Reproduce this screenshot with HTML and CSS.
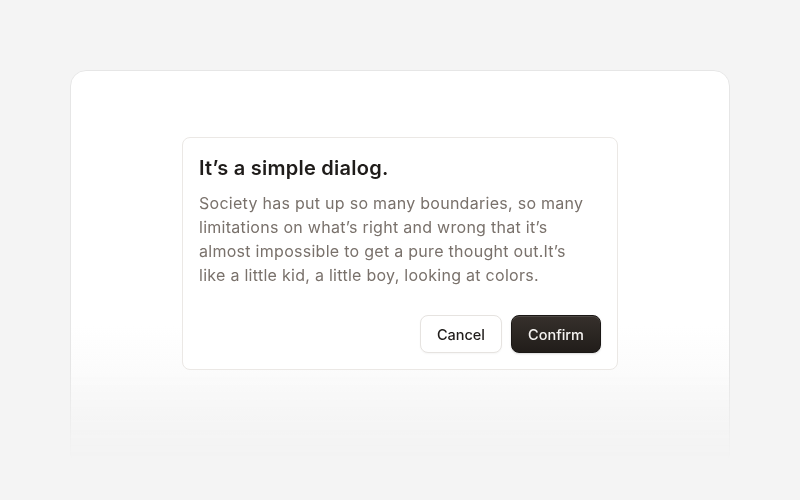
FILE: index.html
```html
<!DOCTYPE html>
<html lang="en">
<head>
<meta charset="utf-8">
<link rel="stylesheet" href="styles.css">
</head>
<body>
<div class="stage">
  <div class="card">
    <div class="dialog">
      <h2 class="title">It’s a simple dialog.</h2>
      <p class="body">Society has put up so many boundaries, so many limitations on what’s right and wrong that it’s almost impossible to get a pure thought out.It’s like a little kid, a little boy, looking at colors.</p>
      <div class="actions">
        <button class="btn btn-cancel">Cancel</button>
        <button class="btn btn-confirm">Confirm</button>
      </div>
    </div>
  </div>
</div>
</body>
</html>
```
FILE: styles.css
```css
html, body {
  margin: 0;
  padding: 0;
  height: 100%;
  background: #f4f4f4;
  font-family: Inter, "Noto Sans", sans-serif;
}
.stage {
  padding: 70px 70px 0;
  height: 500px;
  box-sizing: border-box;
  overflow: hidden;
}
.card {
  height: 400px;
  box-sizing: border-box;
  background: linear-gradient(to bottom, #fff 0, #fff 255px, #f4f4f4 390px);
  border: 1px solid #e6e6e6;
  border-radius: 16px;
  box-shadow: 0 1px 6px rgba(0,0,0,0.05);
  padding-top: 66px;
  display: flex;
  justify-content: center;
  align-items: flex-start;
  -webkit-mask-image: linear-gradient(to bottom, #000 300px, transparent 390px);
  mask-image: linear-gradient(to bottom, #000 300px, transparent 390px);
}
.dialog {
  width: 436px;
  box-sizing: border-box;
  border: 1px solid #ebe8e5;
  border-radius: 8px;
  padding: 16px;
  background: #fff;
}
.title {
  margin: 0;
  font-size: 20px;
  line-height: 28px;
  font-weight: 600;
  color: #1f1c1a;
  letter-spacing: 0.25px;
}
.body {
  margin: 9px 0 0;
  font-size: 16px;
  line-height: 24px;
  color: #79716b;
  letter-spacing: 0.28px;
  padding-right: 12px;
}
.actions {
  display: flex;
  justify-content: flex-end;
  gap: 9px;
  margin-top: 28px;
}
.btn {
  height: 38px;
  box-sizing: border-box;
  border-radius: 8px;
  font-family: inherit;
  font-size: 14.5px;
  font-weight: 500;
  padding: 0 16px;
  cursor: pointer;
}
.btn-cancel {
  margin-left: 2px;
  background: #fff;
  border: 1px solid #e6e3e0;
  color: #1f1c1a;
  box-shadow: 0 1px 2px rgba(0,0,0,0.04);
}
.btn-confirm {
  background: linear-gradient(to bottom, #36302c, #211d1a);
  border: 1px solid #1a1715;
  color: #f5f3f1;
  box-shadow: inset 0 1px 0 rgba(255,255,255,0.12), 0 1px 2px rgba(0,0,0,0.15);
}
```
